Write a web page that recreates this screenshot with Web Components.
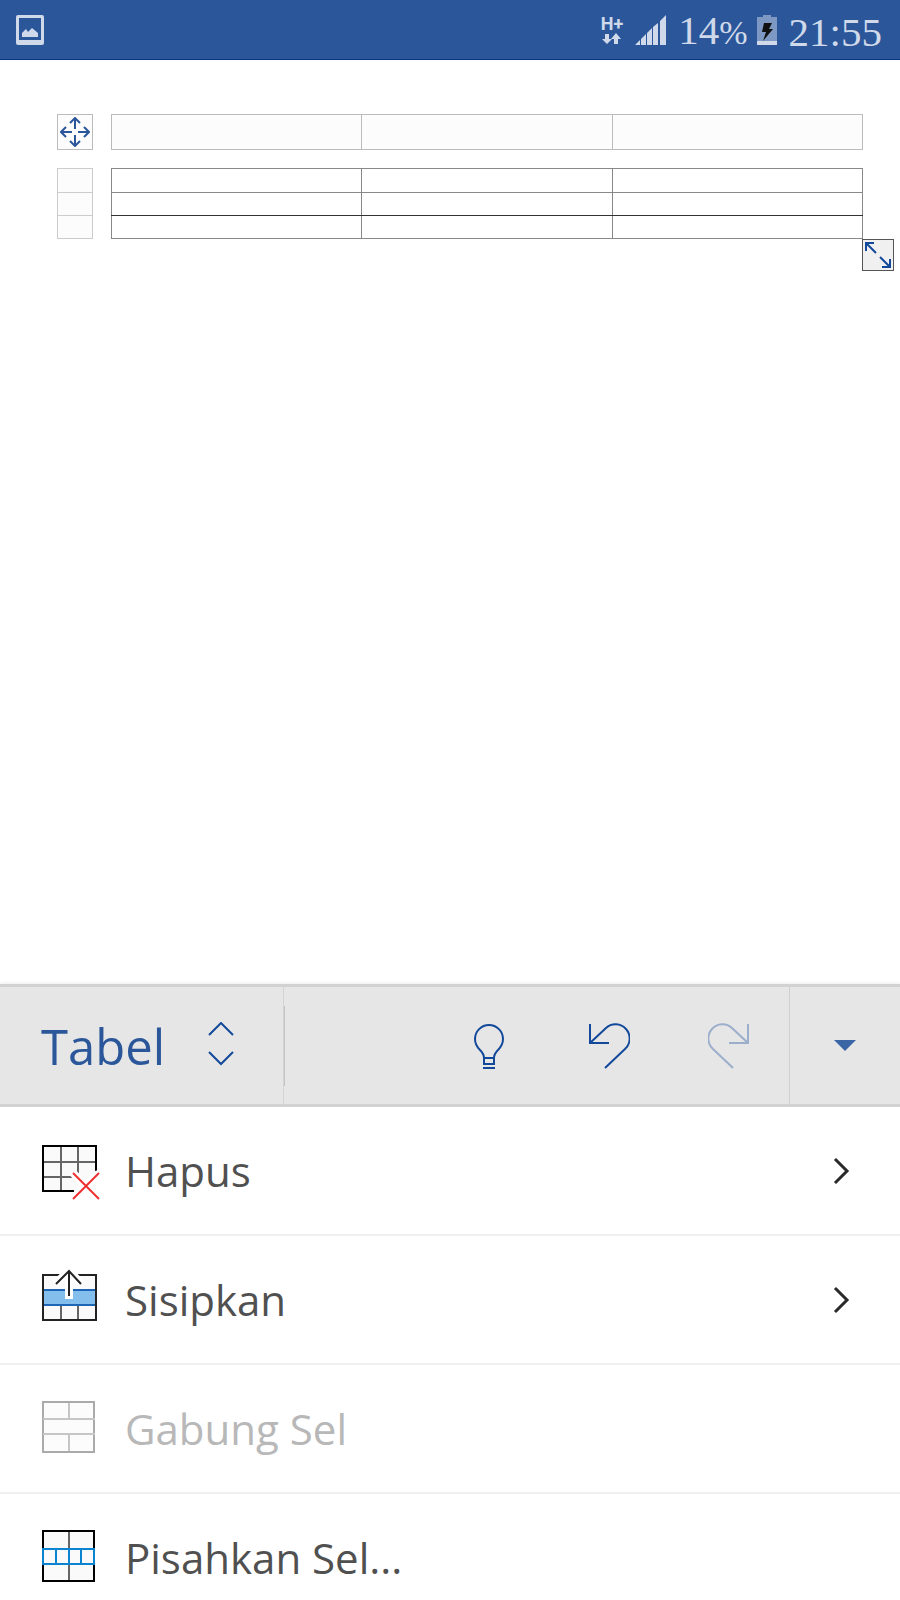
<!DOCTYPE html>
<html lang="id">
<head>
<meta charset="utf-8">
<meta name="viewport" content="width=device-width, initial-scale=1">
<title>Tabel</title>
<style>
    :root {
        --brand: #2b579a;
        --stroke: #13499a;
        --status-ink: #d0d9ea;
    }

    body {
        margin: 0;
        background: #fff;
        font-family: "Open Sans", "Noto Sans", sans-serif;
    }
</style>
</head>
<body>
<word-app></word-app>

<script>
// every element renders its own html() in an open shadow root
class BaseElement extends HTMLElement {
    constructor() {
        super();
        this.attachShadow({ mode: 'open' });
    }

    connectedCallback() {
        this.render();
    }

    render() {
        const template = document.createElement('template');
        template.innerHTML = this.html();
        this.shadowRoot.innerHTML = '';
        this.shadowRoot.appendChild(template.content);
    }
}

class StatusBar extends BaseElement {
    html() {
        return `
            <style>
                :host {
                    display: flex;
                    align-items: center;
                    box-sizing: border-box;
                    height: 60px;
                    padding: 0 18px 0 16px;
                    background: var(--brand);
                    border-bottom: 1px solid #0c3584;
                    color: var(--status-ink);
                    font: 41px/60px "Liberation Serif", serif;
                }
                svg { display: block; fill: currentColor; }
                .right { display: flex; align-items: center; margin-left: auto; }
                .network {
                    margin-right: 12px;
                    font: bold 18px/18px Roboto, sans-serif;
                }
                .signal { margin-right: 12px; }
                .text { padding-top: 4px; }
                .percent { font-size: 34px; }
                .battery { margin: 0 12px 0 9px; }
            </style>
            <svg width="28" height="30" viewBox="0 0 28 30" aria-hidden="true">
                <path fill-rule="evenodd" d="M2 0H26Q28 0 28 2V28Q28 30 26 30H2Q0 30 0 28V2Q0 0 2 0ZM3 3V25H25V3Z"/>
                <path d="M6 22V18L10 14L12 17L16 13L22 18V22Z"/>
            </svg>
            <div class="right">
                <div class="network">
                    H+
                    <svg width="20" height="12" viewBox="0 0 20 12" aria-hidden="true">
                        <path d="M4 1H8V6H11L6 11L1 6H4ZM13 11H17V6H20L15 0L10 6H13Z"/>
                    </svg>
                </div>
                <svg class="signal" width="31" height="30" viewBox="0 0 31 30" aria-hidden="true">
                    <path d="M0 30L5 25V30ZM6 30V24L11 19V30ZM12 30V18L17 13V30ZM18 30V12L23 8V30ZM25 30V6L31 0V30Z"/>
                </svg>
                <span class="text">14<span class="percent">%</span></span>
                <svg class="battery" width="20" height="30" viewBox="0 0 20 30" aria-hidden="true">
                    <path opacity=".5" d="M0 2H6V0H14V2H20V26H0Z"/>
                    <path d="M0 26H20V30H0Z"/>
                    <path fill="#111" d="M7 8H15L12 14H16L6 26L9 17H5Z"/>
                </svg>
                <time class="text">21:55</time>
            </div>
        `;
    }
}

class DocumentPage extends BaseElement {
    html() {
        const rows = '<tr><td></td><td></td><td></td></tr>'.repeat(3);
        return `
            <style>
                :host {
                    display: block;
                    padding: 54px 37px 0 57px;
                    background: #fff;
                }
                .editor {
                    display: grid;
                    grid-template-columns: 36px 1fr;
                    gap: 18px;
                }
                button {
                    display: block;
                    box-sizing: border-box;
                    margin: 0;
                    padding: 0;
                    background: #fcfcfc;
                    border: 1px solid #bbb;
                }
                svg {
                    display: block;
                    margin: auto;
                    fill: none;
                    stroke: var(--stroke);
                    stroke-width: 2;
                }
                .move { height: 36px; }
                .move svg { stroke: var(--brand); }
                .columns { display: flex; }
                .columns button { flex: 1; height: 36px; }
                .columns button + button { border-left: 0; }
                .rows button { width: 36px; height: 25px; border-color: #ccc; }
                .rows button + button { height: 23px; border-top: 0; }
                .grid { position: relative; }
                table {
                    width: 100%;
                    border-collapse: collapse;
                    table-layout: fixed;
                }
                td {
                    box-sizing: border-box;
                    height: 23px;
                    padding: 0;
                    border: 1px solid #888;
                }
                tr:first-child td { height: 24px; }
                tr:nth-child(2) td { border-bottom-color: #333; }
                .resize {
                    position: absolute;
                    top: 100%;
                    left: 100%;
                    width: 32px;
                    height: 32px;
                    margin-left: -1px;
                    background: #f0f0f0;
                    border-color: #555;
                }
            </style>
            <div class="editor">
                <button class="move" aria-label="Pindahkan tabel">
                    <svg width="30" height="30" viewBox="0 0 30 30">
                        <path d="M15 12V1M10 6L15 1L20 6M15 18V29M10 24L15 29L20 24M12 15H1M6 10L1 15L6 20M18 15H29M24 10L29 15L24 20"/>
                    </svg>
                </button>
                <div class="columns">
                    <button aria-label="Kolom 1"></button>
                    <button aria-label="Kolom 2"></button>
                    <button aria-label="Kolom 3"></button>
                </div>
                <div class="rows">
                    <button aria-label="Baris 1"></button>
                    <button aria-label="Baris 2"></button>
                    <button aria-label="Baris 3"></button>
                </div>
                <div class="grid">
                    <table>${rows}</table>
                    <button class="resize" aria-label="Ubah ukuran tabel">
                        <svg width="30" height="30" viewBox="0 0 30 30">
                            <path d="M3 11V3H11M3 3L13 13M17 17L27 27M19 27H27V19"/>
                        </svg>
                    </button>
                </div>
            </div>
        `;
    }
}

class ToolBar extends BaseElement {
    html() {
        return `
            <style>
                :host {
                    display: flex;
                    box-sizing: border-box;
                    height: 123px;
                    background: #e6e6e6;
                    border: solid #d2d2d2;
                    border-width: 3px 0;
                    box-shadow: 0 -1px 3px rgba(0, 0, 0, .08);
                }
                button {
                    display: flex;
                    align-items: center;
                    justify-content: center;
                    margin: 0;
                    padding: 0;
                    background: none;
                    border: 0;
                    color: var(--brand);
                    font: inherit;
                }
                svg {
                    display: block;
                    fill: none;
                    stroke: var(--stroke);
                    stroke-width: 2;
                }
                .tab {
                    box-sizing: border-box;
                    width: 284px;
                    justify-content: space-between;
                    padding: 0 49px 0 41px;
                    border-right: 1px solid #d4d4d4;
                    font-size: 49px;
                    line-height: 60px;
                }
                .divider {
                    align-self: center;
                    width: 1px;
                    height: 80px;
                    background: #c4c4c4;
                }
                .actions { display: flex; margin-left: auto; }
                .actions button { width: 120px; }
                button:disabled { opacity: .35; }
                .collapse { width: 111px; border-left: 1px solid #d0d0d0; }
                .collapse svg { fill: #3b66a6; stroke: none; }
            </style>
            <button class="tab" aria-haspopup="true">
                <span>Tabel</span>
                <svg width="26" height="48" viewBox="0 0 26 48" aria-hidden="true">
                    <path d="M1 13L13 1L25 13M1 30L13 42L25 30"/>
                </svg>
            </button>
            <div class="divider"></div>
            <div class="actions">
                <button aria-label="Beri tahu saya">
                    <svg width="32" height="46" viewBox="0 0 32 46">
                        <path d="M11 41V35Q11 31 7 27Q2 22 2 16A14 14 0 0 1 30 16Q30 22 25 27Q21 31 21 35V41ZM11 35H21M10 45H22"/>
                    </svg>
                </button>
                <button aria-label="Urungkan">
                    <svg width="42" height="46" viewBox="0 0 42 46">
                        <path d="M2 1V20H21M2 20L18 5A14 14 0 0 1 37 26L17 45"/>
                    </svg>
                </button>
                <button aria-label="Ulangi" disabled>
                    <svg width="42" height="46" viewBox="0 0 42 46">
                        <path d="M40 1V20H21M40 20L24 5A14 14 0 0 0 5 26L25 45"/>
                    </svg>
                </button>
            </div>
            <button class="collapse" aria-label="Tutup">
                <svg width="22" height="11" viewBox="0 0 22 11"><path d="M0 0H22L11 11Z"/></svg>
            </button>
        `;
    }
}

class MenuRow extends BaseElement {
    html() {
        const disabled = this.hasAttribute('disabled') ? 'disabled' : '';
        const chevron = this.hasAttribute('submenu')
            ? '<svg class="chevron" width="18" height="28" viewBox="0 0 18 28" aria-hidden="true"><path d="M2 2L14 14L2 26"/></svg>'
            : '';
        return `
            <style>
                :host { display: block; }
                button {
                    display: flex;
                    align-items: center;
                    box-sizing: border-box;
                    width: 100%;
                    height: 129px;
                    margin: 0;
                    padding: 0 49px 0 42px;
                    background: #fff;
                    border: 0;
                    border-bottom: 2px solid #f0f0f0;
                    color: #505050;
                    font: inherit;
                    font-size: 42px;
                    line-height: 60px;
                    text-align: left;
                }
                button:disabled { color: #b8b8b8; }
                .label { flex: 1; margin-left: 23px; }
                .chevron { fill: none; stroke: #2a2a2a; stroke-width: 3; }
            </style>
            <button ${disabled}>
                <slot name="icon"></slot>
                <span class="label"><slot></slot></span>
                ${chevron}
            </button>
        `;
    }
}

class TableMenu extends BaseElement {
    html() {
        return `
            <style>
                :host { display: block; overflow: hidden; }
                svg { display: block; fill: none; stroke-width: 2; }
            </style>
            <menu-row submenu>
                <svg slot="icon" width="60" height="63" viewBox="0 0 60 63" aria-hidden="true">
                    <path fill="#fafafa" d="M1 7H54V52H1Z"/>
                    <path stroke="#666" d="M19 7V52M36 7V36M1 23H54M1 38H30"/>
                    <path stroke="#000" d="M54 32V7H1V52H32"/>
                    <path stroke="#fff" stroke-width="8" d="M31 34L57 60M57 34L31 60"/>
                    <path stroke="#f03030" d="M31 34L57 60M57 34L31 60"/>
                </svg>
                Hapus
            </menu-row>
            <menu-row submenu>
                <svg slot="icon" width="60" height="63" viewBox="0 0 60 63" aria-hidden="true">
                    <path fill="#fafafa" stroke="#222" d="M1 7H54V52H1Z"/>
                    <path stroke="#666" d="M19 38V51M36 38V51"/>
                    <path fill="#83beec" d="M2 23H53V37H2Z"/>
                    <path stroke="#1e66b5" d="M2 22H53M2 37H53"/>
                    <path stroke="#fff" stroke-width="8" d="M27 31V4M13 16L27 3L40 16"/>
                    <path stroke="#222" d="M27 28V4M14 16L27 3L39 16"/>
                </svg>
                Sisipkan
            </menu-row>
            <menu-row disabled>
                <svg slot="icon" width="60" height="63" viewBox="0 0 60 63" aria-hidden="true">
                    <path fill="#fcfcfc" stroke="#aaa" d="M1 5H52V55H1Z"/>
                    <path stroke="#c6c6c6" d="M27 6V22M27 38V54M1 22H53M1 37H53"/>
                </svg>
                Gabung Sel
            </menu-row>
            <menu-row>
                <svg slot="icon" width="60" height="63" viewBox="0 0 60 63" aria-hidden="true">
                    <path fill="#fafafa" stroke="#000" d="M1 5H52V55H1Z"/>
                    <path stroke="#666" d="M27 6V22M27 38V54"/>
                    <path fill="#fafafa" stroke="#0a84d0" d="M1 23H52V38H1ZM14 23V38M27 23V38M39 23V38"/>
                </svg>
                Pisahkan Sel...
            </menu-row>
        `;
    }
}

class WordApp extends BaseElement {
    html() {
        return `
            <style>
                :host {
                    display: flex;
                    flex-direction: column;
                    height: 100vh;
                    overflow: hidden;
                }
                document-page { flex: 1; }
                .panel {
                    display: flex;
                    flex-direction: column;
                    height: 38.5vh;
                }
                status-bar, tool-bar { flex: none; }
                table-menu { flex: 1; min-height: 0; }
            </style>
            <status-bar></status-bar>
            <document-page></document-page>
            <div class="panel">
                <tool-bar></tool-bar>
                <table-menu></table-menu>
            </div>
        `;
    }
}

window.customElements.define('status-bar', StatusBar);
window.customElements.define('document-page', DocumentPage);
window.customElements.define('tool-bar', ToolBar);
window.customElements.define('menu-row', MenuRow);
window.customElements.define('table-menu', TableMenu);
window.customElements.define('word-app', WordApp);
</script>
</body>
</html>
